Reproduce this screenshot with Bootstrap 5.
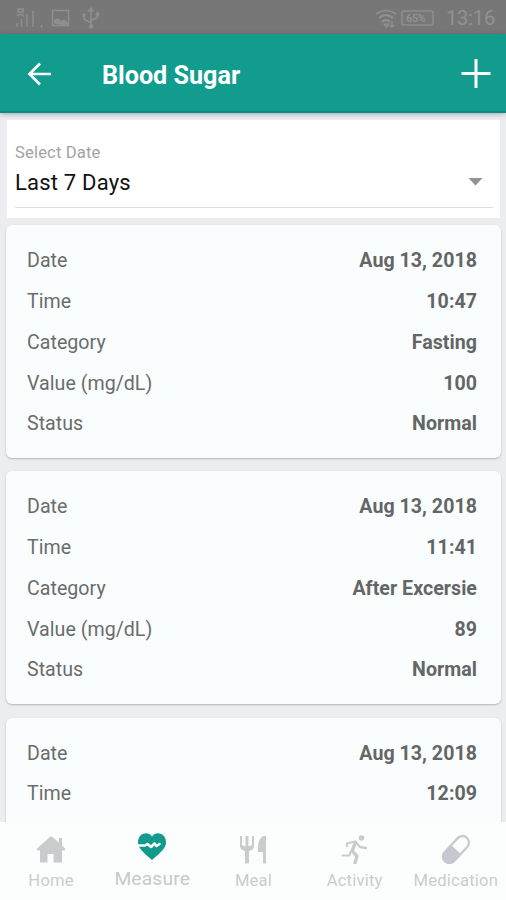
<!DOCTYPE html>
<html lang="en">
<head>
<meta charset="utf-8">
<meta name="viewport" content="width=device-width, initial-scale=1">
<title>Blood Sugar</title>
<link href="https://cdn.jsdelivr.net/npm/bootstrap@5.3.0/dist/css/bootstrap.min.css" rel="stylesheet">
<style>
body{font-family:Roboto,"Liberation Sans",sans-serif;background:#ecedef}
.app{height:900px;width:506px}
.statusbar{height:34px;background:#777;color:#929292;padding:2px 11px 0 15px}
.clock{font-size:20px;line-height:30px;letter-spacing:-.15px;margin-left:11px}
.appbar{height:79px;background:#119c8e;border-bottom:2px solid #0e8b7e;box-shadow:0 1px 5px rgba(40,30,70,.35);color:#fff;padding:3px 15px 0 27px;z-index:1}
.title-text{font-size:25.2px;font-weight:700;line-height:30px;margin:3px 0 0 49px;letter-spacing:-.02px}
.content{padding:7px 5px 0}
.picker{margin:0 1px 7.4px 2px;height:98px;background:#fff;padding:22px 7px 0 8px}
.picker-label{font-size:16.6px;line-height:22px;letter-spacing:.15px;color:#a3a3a3}
.picker-value{border-bottom:1.5px solid #dedede;height:44px;padding:0 10px 0 0;color:#111;font-size:22px;letter-spacing:.2px;line-height:38px}
.record{border:0;border-radius:6px;background:#fafdfd;box-shadow:0 1px 2px rgba(0,0,0,.24);padding:16px 24px 0 21px;margin:0 0 13.7px 1px;height:232.4px;color:#6a6c6c;font-size:19.6px}
.record .entry{height:40.75px;line-height:40.75px}
.record dl,.record dt,.record dd{margin:0;line-height:inherit}
.record dt{font-weight:400;letter-spacing:.03px}
.record dd{font-weight:700;letter-spacing:.04px;color:#646666}
.tabs{height:78px;background:#fcfefe;z-index:1}
.tabs a{width:101.2px;color:#c9cccd;text-decoration:none;font-size:16.6px;letter-spacing:.2px;line-height:20px;padding:12px 0 0 1px}
.tabs svg{margin-bottom:7px}
.tabs .current{font-size:19.2px;padding-top:9px;color:#c6c9ca}
.tabs .current svg{color:#129b8d;margin-bottom:6px}
</style>
<script src="https://cdn.jsdelivr.net/npm/bootstrap@5.3.0/dist/js/bootstrap.bundle.min.js"></script>
</head>
<body>
<div class="app d-flex flex-column overflow-hidden">
  <div class="statusbar d-flex align-items-center flex-shrink-0">
    <svg width="86" height="24" fill="none" stroke="#8f8f8f" stroke-width="1.500">
      <path d="M2 21v-4M6.500 21v-8M12 21V8M18 21V5M26.500 19v3"/><path d="M2 10c3-3 6-2 7 1M3 3h5v3H3z"/>
      <rect x="37.500" y="4.500" width="16" height="15"/><path d="M39 18v-4l4-2 3 3 3-2 4 4v2z" fill="#8f8f8f" stroke="none"/>
      <path d="M76 3v17M69 8v5l7 4M82.500 7v4l-6.500 4"/><path d="M74 5l2-3 2 3z" fill="#8f8f8f"/><circle cx="76" cy="20.500" r="1.500" fill="#8f8f8f"/><circle cx="69" cy="9" r="1"/><path d="M81.500 7h2v2h-2z"/>
    </svg>
    <svg class="ms-auto" width="22" height="22" fill="none" stroke="#929292" stroke-width="1.700"><path d="M1 7Q11 0 21 7M4 11Q11 5 18 11M7 15Q11 11 15 15"/><path d="M9 17h5l-2.500 3zM17 14v6m-2-2 2 2 2-2" stroke-width="1.200"/></svg>
    <svg class="ms-1" width="34" height="18"><rect x="1" y="2" width="31" height="14" rx="2" fill="none" stroke="#8f8f8f" stroke-width="1.500"/><text x="5" y="13" font-size="11" font-weight="700" fill="#929292" textLength="20">65%</text></svg>
    <span class="clock">13:16</span>
  </div>
  <header class="appbar d-flex align-items-center flex-shrink-0 position-relative">
    <svg width="26" height="26" fill="none" stroke="#fff" stroke-width="2.600"><path d="M24 13H3M13 2.500 2.500 13 13 23.500"/></svg>
    <h1 class="title-text">Blood Sugar</h1>
    <svg class="ms-auto" width="30" height="30" stroke="#fff" stroke-width="3"><path d="M.5 14.500h29M15 0v29"/></svg>
  </header>
  <main class="content flex-grow-1 overflow-hidden">
    <section class="picker">
      <div class="picker-label">Select Date</div>
      <div class="picker-value d-flex justify-content-between"><span>Last 7 Days</span><svg width="15" height="38"><path d="M.5 14h14l-7 7.500z" fill="#929292"/></svg></div>
    </section>
    <article class="card record"><dl>
      <div class="entry d-flex justify-content-between"><dt>Date</dt><dd>Aug 13, 2018</dd></div>
      <div class="entry d-flex justify-content-between"><dt>Time</dt><dd>10:47</dd></div>
      <div class="entry d-flex justify-content-between"><dt>Category</dt><dd>Fasting</dd></div>
      <div class="entry d-flex justify-content-between"><dt>Value (mg/dL)</dt><dd>100</dd></div>
      <div class="entry d-flex justify-content-between"><dt>Status</dt><dd>Normal</dd></div>
    </dl></article>
    <article class="card record"><dl>
      <div class="entry d-flex justify-content-between"><dt>Date</dt><dd>Aug 13, 2018</dd></div>
      <div class="entry d-flex justify-content-between"><dt>Time</dt><dd>11:41</dd></div>
      <div class="entry d-flex justify-content-between"><dt>Category</dt><dd>After Excersie</dd></div>
      <div class="entry d-flex justify-content-between"><dt>Value (mg/dL)</dt><dd>89</dd></div>
      <div class="entry d-flex justify-content-between"><dt>Status</dt><dd>Normal</dd></div>
    </dl></article>
    <article class="card record"><dl>
      <div class="entry d-flex justify-content-between"><dt>Date</dt><dd>Aug 13, 2018</dd></div>
      <div class="entry d-flex justify-content-between"><dt>Time</dt><dd>12:09</dd></div>
    </dl></article>
  </main>
  <nav class="tabs d-flex flex-shrink-0 position-relative">
    <a href="#" class="d-flex flex-column align-items-center"><svg width="30" height="30" fill="currentColor"><path d="M15 2 0.500 15l1 1.500H4V28.500h7.500V20h6v8.500H26v-12h2.500l1-1.500-3.500-3.500V4h-3v4.500z"/></svg>Home</a>
    <a href="#" class="current d-flex flex-column align-items-center"><svg width="30" height="32" fill="currentColor"><path d="M15 5.500C12 0 1 1 1 11.500c0 5 4 9 14 17.500 10-8.500 14-12.500 14-17.500C29 1 18 0 15 5.500z"/><path d="M1.500 14.500H8l2.500-1.500 3.500 3 3.500-3.500 2 2.500 3-2" fill="none" stroke="#fcfefe" stroke-width="2.600" stroke-linejoin="round" stroke-linecap="round"/></svg>Measure</a>
    <a href="#" class="d-flex flex-column align-items-center"><svg width="28" height="30" fill="currentColor"><path d="M1 2h2v8q0 2 3.500 2V2h3v10q3.500 0 3.500-2V2h2v10q0 4-5 5v12.500h-4V17Q1 16 1 12zM27 2v27.500h-3V18h-5q-1-12 5-16z"/></svg>Meal</a>
    <a href="#" class="d-flex flex-column align-items-center"><svg width="28" height="30" fill="none" stroke="currentColor" stroke-width="2.300" stroke-linecap="round" stroke-linejoin="round"><circle cx="20.500" cy="4" r="2.800" fill="currentColor" stroke="none"/><path d="M6 12V9.500l8-2 5 5.500 6 1"/><path d="M14.500 8.500 11 17l5 5-2 7" stroke-width="3.300"/><path d="M9.500 18l-1 3.500H1.500" stroke-width="2"/></svg>Activity</a>
    <a href="#" class="d-flex flex-column align-items-center"><svg width="32" height="30"><g transform="rotate(43 16 15.500)"><rect x="9.500" y="-.5" width="13" height="32" rx="6.500" fill="none" stroke="#c9cccd" stroke-width="2.400"/><path d="M9 15.500h14v10a7 7 0 0 1-14 0z" fill="#c5c9cf"/></g></svg>Medication</a>
  </nav>
</div>
</body>
</html>
